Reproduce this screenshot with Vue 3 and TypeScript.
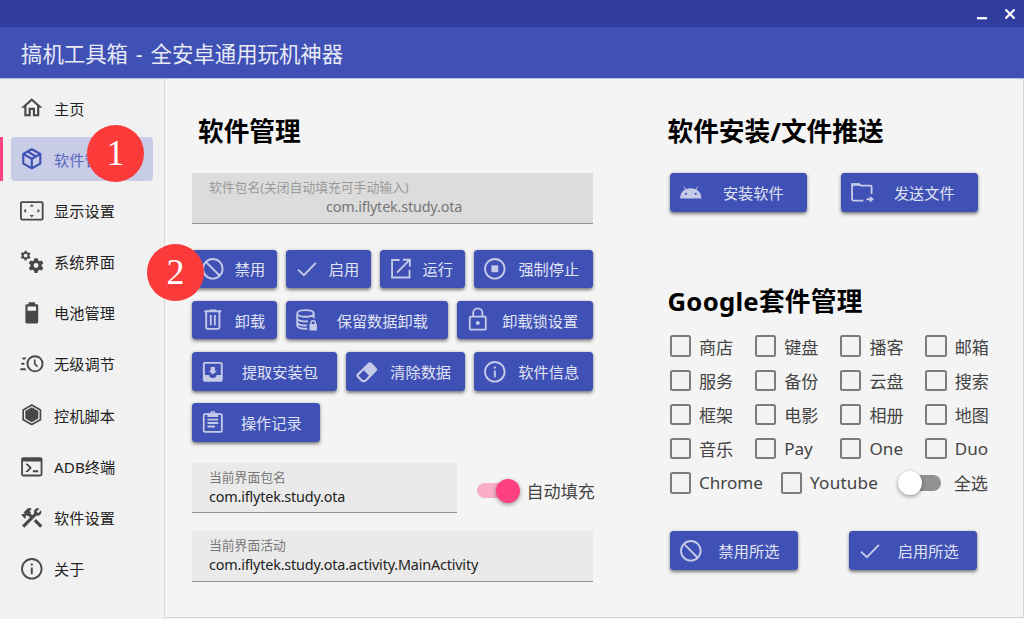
<script setup lang="ts">
import { ref } from 'vue'

interface Glyph {
  fill?: string
  line?: string
  width?: number
}

interface Action {
  icon: string
  text: string
  width: number
}

const icons: Record<string, Glyph> = {
  home: { fill: 'M12 5.69L17 10.19V18H15V12H9V18H7V10.19L12 5.69M12 3L2 12H5V20H11V14H13V20H19V12H22' },
  box: { fill: 'M21,16.5C21,16.88 20.79,17.21 20.47,17.38L12.57,21.82C12.41,21.94 12.21,22 12,22C11.79,22 11.59,21.94 11.43,21.82L3.53,17.38C3.21,17.21 3,16.88 3,16.5V7.5C3,7.12 3.21,6.79 3.53,6.62L11.43,2.18C11.59,2.06 11.79,2 12,2C12.21,2 12.41,2.06 12.57,2.18L20.47,6.62C20.79,6.79 21,7.12 21,7.5V16.5M12,4.15L10.11,5.22L16,8.61L17.96,7.5L12,4.15M6.04,7.5L12,10.85L13.96,9.75L8.08,6.35L6.04,7.5M5,15.91L11,19.29V12.58L5,9.21V15.91M19,15.91V9.21L13,12.58V19.29L19,15.91Z' },
  screen: {
    fill: 'M12 5.8L10 8H14ZM12 18.2L14 16H10ZM4.4 12L6.6 10V14ZM19.6 12L17.4 10V14Z',
    line: 'M3 3.8H21A1.2 1.2 0 0 1 22.2 5V19A1.2 1.2 0 0 1 21 20.2H3A1.2 1.2 0 0 1 1.8 19V5A1.2 1.2 0 0 1 3 3.8Z',
    width: 1.7,
  },
  gears: {
    fill: 'M14.6 8.600H17.400L17.900 10.600L19.400 11.500L21.400 10.900L22.800 13.300L21.300 14.700V16.300L22.800 17.700L21.400 20.100L19.400 19.500L17.900 20.400L17.400 22.400H14.600L14.100 20.400L12.600 19.500L10.600 20.100L9.200 17.700L10.700 16.300V14.700L9.200 13.300L10.600 10.900L12.600 11.500L14.100 10.600ZM16 13.200a2.300 2.300 0 1 0 0 4.600a2.300 2.300 0 1 0 0-4.600ZM5.400 1.700H7L7.400 3L8.500 3.600L9.900 3.300L10.700 4.700L9.800 5.700V6.700L10.700 7.700L9.900 9.100L8.500 8.800L7.400 9.400L7 10.700H5.400L5 9.400L3.900 8.800L2.500 9.100L1.700 7.700L2.600 6.700V5.700L1.700 4.700L2.500 3.300L3.900 3.600L5 3ZM6.200 4.400a1.800 1.800 0 1 0 0 3.600a1.800 1.800 0 1 0 0-3.600Z',
  },
  battery: { fill: 'M16,10H8V6H16M16.67,4H15V2H9V4H7.33A1.33,1.33 0 0,0 6,5.33V20.67C6,21.4 6.6,22 7.33,22H16.67A1.33,1.33 0 0,0 18,20.67V5.33C18,4.6 17.4,4 16.67,4Z' },
  clock: { fill: 'M15,4A8,8 0 0,1 23,12A8,8 0 0,1 15,20A8,8 0 0,1 7,12A8,8 0 0,1 15,4M15,5.8A6.2,6.2 0 0,0 8.8,12A6.2,6.2 0 0,0 15,18.2A6.2,6.2 0 0,0 21.2,12A6.2,6.2 0 0,0 15,5.8M14,8H15.5V11.78L17.83,14.11L16.77,15.17L14,12.4V8M2,18A1,1 0 0,1 1,17A1,1 0 0,1 2,16.2H5.83C6.14,16.71 6.54,17.38 7,18H2M3,12.9A.9,.9 0 0,1 2,12A.9,.9 0 0,1 3,11.1H5.05L5,12L5.05,12.9H3M4,7.9A.9,.9 0 0,1 3,7A.9,.9 0 0,1 4,6.1H7C6.54,6.62 6.14,7.29 5.83,7.9H4Z' },
  hexagon: {
    fill: 'M12 5L18.100 8.500V15.500L12 19L5.900 15.500V8.500Z',
    line: 'M12 2.800L20.100 7.400V16.600L12 21.200L3.900 16.600V7.400Z',
    width: 1.600,
  },
  terminal: { fill: 'M20.300,19.300V7H3.700V19.300H20.300M20,3A2,2 0 0,1 22,5V19A2,2 0 0,1 20,21H4A2,2 0 0,1 2,19V5C2,3.89 2.9,3 4,3H20M13,17V15.200H18V17H13M9.700,13L5.800,9.100H8.200L11.400,12.300C11.800,12.690 11.800,13.330 11.400,13.720L8.200,16.900H5.800L9.700,13Z' },
  tools: { fill: 'M13.78 15.3L19.78 21.3L21.89 19.14L15.89 13.14L13.78 15.3M17.5 10.1C17.11 10.1 16.69 10.05 16.36 9.91L4.97 21.25L2.86 19.14L10.27 11.74L8.5 9.96L7.78 10.66L6.33 9.25V12.11L5.63 12.81L2.11 9.25L2.81 8.55H5.62L4.22 7.14L7.78 3.58C8.95 2.41 10.83 2.41 12 3.58L9.89 5.74L11.3 7.14L10.59 7.85L12.38 9.63L14.2 7.75C14.06 7.42 14 7 14 6.63C14 4.66 15.56 3.11 17.5 3.11C18.09 3.11 18.61 3.25 19.08 3.53L16.41 6.2L17.91 7.7L20.58 5.03C20.86 5.5 21 6 21 6.63C21 8.55 19.45 10.1 17.5 10.1Z' },
  info: {
    fill: 'M11.100 7H12.900V8.800H11.100ZM11.100 10.800H12.900V17H11.100Z',
    line: 'M2.800 12a9.200 9.200 0 1 0 18.400 0a9.200 9.200 0 1 0-18.400 0Z',
    width: 1.700,
  },
  ban: { line: 'M2.800 12a9.200 9.200 0 1 0 18.400 0a9.200 9.200 0 1 0-18.400 0ZM5.500 5.500L18.500 18.500', width: 1.750 },
  check: { line: 'M3.700 12.800L9.300 18L20.500 6.400', width: 1.800 },
  open: { line: 'M11 3.800H3.800V20.200H20.200V13M14 3.500H20.500V10M20.300 3.700L8.500 15.500', width: 1.750 },
  stop: {
    fill: 'M8.800 8.800H15.200V15.200H8.800Z',
    line: 'M2.800 12a9.200 9.200 0 1 0 18.400 0a9.200 9.200 0 1 0-18.400 0Z',
    width: 1.700,
  },
  trash: { line: 'M4 4H20M9 3.200H15M5.800 4V19A1.500 1.500 0 0 0 7.300 20.500H16.700A1.500 1.500 0 0 0 18.200 19V4M10.100 7.500V17M13.900 7.500V17', width: 1.750 },
  database: {
    fill: 'M14.500 16H15.300V15A2.700 2.700 0 0 1 20.700 15V16H21.500V22H14.500ZM16.600 16H19.400V15A1.400 1.400 0 0 0 16.600 15Z',
    line: 'M3 6C3 1.800 18.500 1.800 18.500 6S3 10.200 3 6ZM3 6V17.300C3 19.300 7 20.400 12.500 20.400M3 10.500C3 13 8 13.800 13 13.500M3 14.500C3 16.500 7 17.500 12 17.300M18.500 6V10.500',
    width: 1.700,
  },
  lock: {
    fill: 'M12 13.100a1.900 1.900 0 1 0 0 3.800a1.900 1.900 0 1 0 0-3.800Z',
    line: 'M5.500 9H18.500A1 1 0 0 1 19.500 10V20.300A1 1 0 0 1 18.500 21.300H5.500A1 1 0 0 1 4.500 20.300V10A1 1 0 0 1 5.500 9ZM7.700 9V5.500A4.300 4.300 0 0 1 16.300 5.500V9',
    width: 1.700,
  },
  extract: { fill: 'M15.900,11H14V7.500H10V11H8.100L12,14.600M19.500,15H15.500A3.500,3 0 0,1 12,17.800A3.500,3 0 0,1 8.500,15H4.500V4.500H19.500M19.500,2.700H4.500A1.800,1.800 0 0 0 2.700,4.500V19.500A1.800,1.800 0 0,0 4.500,21.300H19.500A1.800,1.800 0 0,0 21.300,19.500V4.500A1.800,1.800 0 0,0 19.500,2.700Z' },
  eraser: { fill: 'M16.24,3.56L21.19,8.5C21.97,9.29 21.97,10.55 21.19,11.34L12,20.53C10.44,22.09 7.91,22.09 6.34,20.53L2.81,17C2.03,16.21 2.03,14.95 2.81,14.16L13.41,3.56C14.2,2.78 15.46,2.78 16.24,3.56M4.22,15.58L7.76,19.11C8.54,19.9 9.8,19.9 10.59,19.11L14.12,15.58L9.17,10.63L4.22,15.58Z' },
  clipboard: {
    fill: 'M7 3H9.300A2.800 2.800 0 0 1 14.700 3H17V6.500H7ZM12 2.400a1 1 0 1 0 0 2a1 1 0 1 0 0-2Z',
    line: 'M4.500 3.800H19.500A1 1 0 0 1 20.500 4.800V19.500A1 1 0 0 1 19.500 20.500H4.500A1 1 0 0 1 3.500 19.500V4.800A1 1 0 0 1 4.500 3.800ZM7 9H17M7 12.200H17M7 15.500H14',
    width: 1.700,
  },
  android: {
    fill: 'M2 18.400C2 12.900 5.500 8.700 12 8.700S22 12.900 22 18.400ZM7.500 12.900a1 1 0 1 0 0 2a1 1 0 1 0 0-2ZM16.500 12.900a1 1 0 1 0 0 2a1 1 0 1 0 0-2Z',
    line: 'M5.500 7.300L7.300 10M18.500 7.300L16.700 10',
    width: 0.900,
  },
  folder: {
    fill: 'M2.200 4H10L12 6.400H2.200ZM19.500 16L23.400 19L19.500 22Z',
    line: 'M13.500 20.200H4A1.200 1.200 0 0 1 2.900 19V5H9.500L11.200 6.300H20.200A1 1 0 0 1 21.200 7.300V14M16.500 19H20',
    width: 1.700,
  },
}

const navItems = [
  { icon: 'home', text: '主页' },
  { icon: 'box', text: '软件管理' },
  { icon: 'screen', text: '显示设置' },
  { icon: 'gears', text: '系统界面' },
  { icon: 'battery', text: '电池管理' },
  { icon: 'clock', text: '无级调节' },
  { icon: 'hexagon', text: '控机脚本' },
  { icon: 'terminal', text: 'ADB终端' },
  { icon: 'tools', text: '软件设置' },
  { icon: 'info', text: '关于' },
]

const actionRows: Action[][] = [
  [
    { icon: 'ban', text: '禁用', width: 85.4 },
    { icon: 'check', text: '启用', width: 85.4 },
    { icon: 'open', text: '运行', width: 85.4 },
    { icon: 'stop', text: '强制停止', width: 119.6 },
  ],
  [
    { icon: 'trash', text: '卸载', width: 85.4 },
    { icon: 'database', text: '保留数据卸载', width: 162.2 },
    { icon: 'lock', text: '卸载锁设置', width: 136.6 },
  ],
  [
    { icon: 'extract', text: '提取安装包', width: 145.1 },
    { icon: 'eraser', text: '清除数据', width: 119.5 },
    { icon: 'info', text: '软件信息', width: 119.6 },
  ],
  [{ icon: 'clipboard', text: '操作记录', width: 128 }],
]

const pushActions: Action[] = [
  { icon: 'android', text: '安装软件', width: 137 },
  { icon: 'folder', text: '发送文件', width: 137 },
]

const bulkActions: Action[] = [
  { icon: 'ban', text: '禁用所选', width: 128.3 },
  { icon: 'check', text: '启用所选', width: 128.3 },
]

const apps = ['商店', '键盘', '播客', '邮箱', '服务', '备份', '云盘', '搜索', '框架', '电影', '相册', '地图', '音乐', 'Pay', 'One', 'Duo']

const current = ref(1)
const chosen = ref<string[]>([])
const autoFill = ref(true)
const allSelected = ref(false)

function toggle(name: string) {
  chosen.value = chosen.value.includes(name)
    ? chosen.value.filter((n) => n !== name)
    : [...chosen.value, name]
}
</script>

<template>
  <div class="window">
    <div class="titlebar">
      <svg class="min" viewBox="0 0 12 14"><path d="M1 11.200H11" /></svg>
      <svg class="close" viewBox="0 0 12 12"><path d="M1.500 1.500L10.500 10.500M10.500 1.500L1.500 10.500" /></svg>
    </div>
    <header class="header">搞机工具箱 - 全安卓通用玩机神器</header>
    <div class="body">
      <nav class="sidebar">
        <div v-for="(item, i) in navItems" :key="item.text" class="nav-row" :class="{ active: i === current }" @click="current = i">
          <div class="nav-item">
            <svg class="icon" viewBox="0 0 24 24">
              <path v-if="icons[item.icon].fill" class="fill" :d="icons[item.icon].fill" />
              <path v-if="icons[item.icon].line" class="line" :d="icons[item.icon].line" :stroke-width="icons[item.icon].width" />
            </svg>
            <span>{{ item.text }}</span>
          </div>
        </div>
        <div class="badge badge-one">1</div>
        <div class="badge badge-two">2</div>
      </nav>

      <main class="content">
        <section class="left">
          <h2>软件管理</h2>
          <div class="field disabled">
            <label>软件包名(关闭自动填充可手动输入)</label>
            <div class="value">com.iflytek.study.ota</div>
          </div>
          <div class="actions">
            <div v-for="(row, r) in actionRows" :key="r" class="action-row">
              <button v-for="a in row" :key="a.text" class="btn" :style="{ width: a.width + 'px' }">
                <svg class="icon" viewBox="0 0 24 24">
                  <path v-if="icons[a.icon].fill" class="fill" :d="icons[a.icon].fill" />
                  <path v-if="icons[a.icon].line" class="line" :d="icons[a.icon].line" :stroke-width="icons[a.icon].width" />
                </svg>
                <span>{{ a.text }}</span>
              </button>
            </div>
          </div>
          <div class="package-row">
            <div class="field short">
              <label>当前界面包名</label>
              <div class="value">com.iflytek.study.ota</div>
            </div>
            <div class="switch" :class="{ on: autoFill }" @click="autoFill = !autoFill"><i></i></div>
            <span class="option">自动填充</span>
          </div>
          <div class="field">
            <label>当前界面活动</label>
            <div class="value">com.iflytek.study.ota.activity.MainActivity</div>
          </div>
        </section>

        <section class="right">
          <h2>软件安装/文件推送</h2>
          <div class="pair">
            <button v-for="a in pushActions" :key="a.text" class="btn" :style="{ width: a.width + 'px' }">
              <svg class="icon" viewBox="0 0 24 24">
                <path v-if="icons[a.icon].fill" class="fill" :d="icons[a.icon].fill" />
                <path v-if="icons[a.icon].line" class="line" :d="icons[a.icon].line" :stroke-width="icons[a.icon].width" />
              </svg>
              <span>{{ a.text }}</span>
            </button>
          </div>
          <h2 class="google">Google套件管理</h2>
          <div class="apps">
            <div v-for="name in apps" :key="name" class="check" :class="{ checked: chosen.includes(name) }" @click="toggle(name)">
              <i></i><span>{{ name }}</span>
            </div>
          </div>
          <div class="last-row">
            <div class="check chrome" :class="{ checked: chosen.includes('Chrome') }" @click="toggle('Chrome')"><i></i><span>Chrome</span></div>
            <div class="check youtube" :class="{ checked: chosen.includes('Youtube') }" @click="toggle('Youtube')"><i></i><span>Youtube</span></div>
            <div class="switch" :class="{ on: allSelected }" @click="allSelected = !allSelected"><i></i></div>
            <span class="option">全选</span>
          </div>
          <div class="pair bulk">
            <button v-for="a in bulkActions" :key="a.text" class="btn" :style="{ width: a.width + 'px' }">
              <svg class="icon" viewBox="0 0 24 24">
                <path v-if="icons[a.icon].fill" class="fill" :d="icons[a.icon].fill" />
                <path v-if="icons[a.icon].line" class="line" :d="icons[a.icon].line" :stroke-width="icons[a.icon].width" />
              </svg>
              <span>{{ a.text }}</span>
            </button>
          </div>
        </section>
      </main>
    </div>
  </div>
</template>

<style>
body {
  overflow: hidden;
}
</style>

<style scoped>
.window {
  box-sizing: border-box;
  width: 1024px;
  height: 619px;
  display: flex;
  flex-direction: column;
  overflow: hidden;
  background: #f4f4f4;
  color: #222;
  font-family: "Noto Sans", "Noto Sans CJK SC", sans-serif;
  white-space: nowrap;
}
.titlebar {
  flex: none;
  height: 27px;
  display: flex;
  justify-content: flex-end;
  align-items: center;
  gap: 16px;
  padding-right: 8px;
  box-sizing: border-box;
  background: #303c9e;
}
.titlebar svg {
  width: 12px;
  fill: none;
  stroke: #fff;
}
.titlebar .min {
  height: 14px;
  stroke-width: 2.3;
}
.titlebar .close {
  height: 12px;
  stroke-width: 2.2;
}
.header {
  flex: none;
  height: 52px;
  box-sizing: border-box;
  padding-left: 21px;
  border-bottom: 1px solid #b3bbea;
  line-height: 54px;
  font-size: 21.4px;
  word-spacing: 2.3px;
  color: #e8eaf6;
  background: #3f51b5;
}
.body {
  flex: 1;
  display: flex;
  min-height: 0;
}
.sidebar {
  position: relative;
  flex: none;
  width: 165px;
  box-sizing: border-box;
  padding-top: 7px;
  border-right: 1px solid #dadada;
  background: #f1f1f1;
}
.nav-row {
  height: 44px;
  margin-bottom: 7.200px;
  padding-left: 11px;
  box-sizing: border-box;
  border-left: 0 solid #ff4081;
}
.nav-row.active {
  border-left-width: 3px;
  padding-left: 8px;
}
.nav-item {
  width: 142px;
  height: 44px;
  display: flex;
  align-items: center;
  box-sizing: border-box;
  padding-left: 8px;
  border-radius: 4px;
  font-size: 15.200px;
  color: #222;
}
.nav-item span {
  padding-bottom: 1px;
}
.nav-item .icon {
  color: #484848;
  margin-right: 9.500px;
}
.active .nav-item {
  background: #c8cce6;
  color: #5a69c0;
}
.active .nav-item .icon {
  color: #3f51b5;
}
.icon {
  flex: none;
  width: 25.600px;
  height: 25.600px;
}
.fill {
  fill: currentColor;
  fill-rule: evenodd;
}
.line {
  fill: none;
  stroke: currentColor;
}
.badge {
  position: absolute;
  width: 57px;
  height: 57px;
  border-radius: 50%;
  background: #fb3a3a;
  color: #fff;
  font: 36px/57px "Liberation Serif", serif;
  text-align: center;
}
.badge-one {
  left: 87px;
  top: 46px;
}
.badge-two {
  left: 147px;
  top: 165px;
  z-index: 2;
}
.content {
  flex: 1;
  display: flex;
  box-sizing: border-box;
  margin-bottom: 1px;
  border-right: 1px solid #d2d2d2;
  border-bottom: 1px solid #d6d6d6;
}
.left {
  width: 401px;
  margin-left: 27px;
}
.right {
  width: 320px;
  margin-left: 76.500px;
}
h2 {
  height: 38px;
  margin: 34px 0 22px 6px;
  line-height: 38px;
  font-size: 25.700px;
  font-weight: 700;
  color: #000;
}
.right h2 {
  margin-left: -2px;
}
.field {
  height: 50.500px;
  box-sizing: border-box;
  padding: 4px 17px 0;
  background: #eaeaea;
  border-bottom: 1.500px solid #919191;
}
.field label {
  display: block;
  height: 20px;
  line-height: 20px;
  font-size: 12.800px;
  color: #777;
}
.value {
  height: 20px;
  line-height: 20px;
  font-size: 14.400px;
  letter-spacing: -0.180px;
  color: #222;
}
.disabled {
  background: #dcdcdc;
}
.disabled label {
  color: #999;
}
.disabled .value {
  color: #777;
  text-align: center;
  padding-left: 3px;
}
.actions {
  margin-top: 26.200px;
  display: flex;
  flex-direction: column;
  gap: 12.700px;
}
.action-row {
  display: flex;
  gap: 8.500px;
}
.btn {
  flex: none;
  height: 38.500px;
  display: flex;
  align-items: center;
  margin: 0;
  padding: 0 0 0 8px;
  border: 0;
  border-radius: 3.500px;
  background: #3f51b5;
  box-shadow: 0 1.500px 3.500px rgba(0, 0, 0, 0.5);
  color: #e0e3f4;
  font-family: inherit;
  font-size: 15.200px;
}
.btn .icon {
  color: #c5cae9;
  margin-right: -3px;
}
.btn span {
  flex: 1;
  text-align: center;
  padding-bottom: 1px;
}
.package-row {
  display: flex;
  align-items: center;
  margin: 21.200px 0 18px;
}
.short {
  flex: none;
  width: 264.500px;
}
.switch {
  position: relative;
  flex: none;
  width: 38px;
  height: 15.500px;
  border-radius: 8px;
  background: #919191;
}
.switch i {
  position: absolute;
  left: -5px;
  top: -4.200px;
  width: 24px;
  height: 24px;
  border-radius: 50%;
  background: #fff;
  box-shadow: 0 1.500px 4px rgba(0, 0, 0, 0.4);
}
.switch.on {
  background: #f9adc8;
}
.switch.on i {
  left: 19px;
  background: #ff4081;
}
.package-row .switch {
  margin: 4.500px 12px 0 20px;
}
.option {
  font-size: 17.100px;
  color: #444;
}
.package-row .option {
  padding-top: 5px;
}
.pair {
  display: flex;
  gap: 34px;
}
h2.google {
  margin-top: 71.500px;
  margin-bottom: 8px;
  letter-spacing: 0.250px;
}
.apps {
  display: grid;
  grid-template-columns: repeat(4, 85.300px);
  grid-auto-rows: 34.200px;
}
.check {
  display: flex;
  align-items: center;
  height: 34.200px;
  font-size: 17.100px;
  color: #444;
}
.check i {
  flex: none;
  width: 21.400px;
  height: 21.400px;
  box-sizing: border-box;
  border: 2px solid #7c7c7c;
  border-radius: 2.500px;
  margin-right: 8px;
}
.check.checked i {
  background: #ff4081;
}
.last-row {
  display: flex;
  align-items: center;
  height: 34.200px;
}
.chrome {
  width: 111.200px;
}
.youtube {
  width: 122px;
  letter-spacing: 0.200px;
}
.last-row .option {
  margin-left: 13px;
}
.bulk {
  gap: 51px;
  margin-top: 31.500px;
}
</style>
